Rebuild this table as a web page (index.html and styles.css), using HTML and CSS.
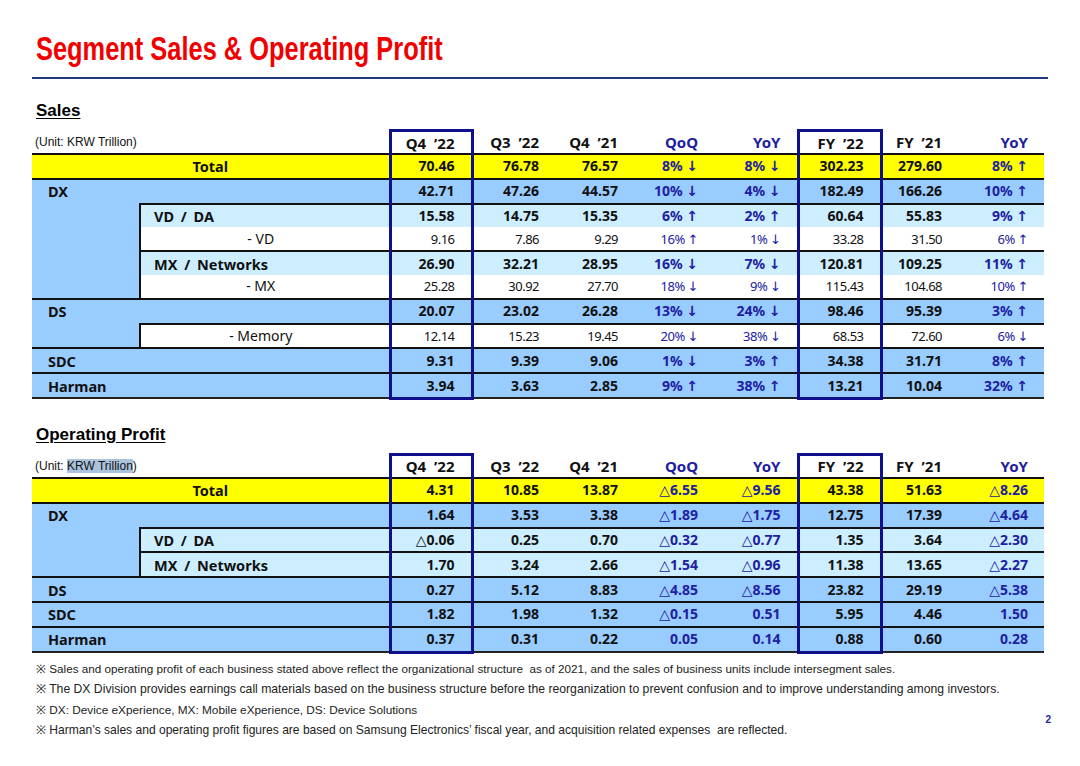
FILE: index.html
```html
<!DOCTYPE html>
<html>
<head>
<meta charset="utf-8">
<link rel="stylesheet" href="styles.css">
</head>
<body>
<div class="page">
  <h1 class="title"><span class="title-text">Segment Sales &amp; Operating Profit</span></h1>

  <h2 class="sec">Sales</h2>
  <table class="seg">
    <colgroup>
      <col class="w1"><col class="w2"><col class="wq4"><col class="wq3"><col class="wq21"><col class="wqoq"><col class="wyoy"><col class="wfy22"><col class="wfy21"><col class="wyoy2">
    </colgroup>
    <tr class="hd">
      <td colspan="2" class="unit">(Unit: KRW Trillion)</td>
      <td class="bx">Q4 ’22</td><td>Q3 ’22</td><td>Q4 ’21</td><td class="chg">QoQ</td><td class="chg">YoY</td><td class="bx">FY ’22</td><td>FY ’21</td><td class="chg">YoY</td>
    </tr>
    <tr class="tot bt">
      <td colspan="2" class="lbl-c">Total</td>
      <td class="bx">70.46</td><td>76.78</td><td>76.57</td><td class="chg">8% ↓</td><td class="chg">8% ↓</td><td class="bx">302.23</td><td>279.60</td><td class="chg">8% ↑</td>
    </tr>
    <tr class="mid bt">
      <td colspan="2" class="lbl">DX</td>
      <td class="bx">42.71</td><td>47.26</td><td>44.57</td><td class="chg">10% ↓</td><td class="chg">4% ↓</td><td class="bx">182.49</td><td>166.26</td><td class="chg">10% ↑</td>
    </tr>
    <tr class="sub bt">
      <td rowspan="4" class="sp"></td>
      <td class="lbl2">VD / DA</td>
      <td class="bx">15.58</td><td>14.75</td><td>15.35</td><td class="chg">6% ↑</td><td class="chg">2% ↑</td><td class="bx">60.64</td><td>55.83</td><td class="chg">9% ↑</td>
    </tr>
    <tr class="lo">
      <td class="lbl3">- VD</td>
      <td class="bx">9.16</td><td>7.86</td><td>9.29</td><td class="chg">16% ↑</td><td class="chg">1% ↓</td><td class="bx">33.28</td><td>31.50</td><td class="chg">6% ↑</td>
    </tr>
    <tr class="sub bt">
      <td class="lbl2">MX / Networks</td>
      <td class="bx">26.90</td><td>32.21</td><td>28.95</td><td class="chg">16% ↓</td><td class="chg">7% ↓</td><td class="bx">120.81</td><td>109.25</td><td class="chg">11% ↑</td>
    </tr>
    <tr class="lo">
      <td class="lbl3">- MX</td>
      <td class="bx">25.28</td><td>30.92</td><td>27.70</td><td class="chg">18% ↓</td><td class="chg">9% ↓</td><td class="bx">115.43</td><td>104.68</td><td class="chg">10% ↑</td>
    </tr>
    <tr class="mid bt">
      <td colspan="2" class="lbl">DS</td>
      <td class="bx">20.07</td><td>23.02</td><td>26.28</td><td class="chg">13% ↓</td><td class="chg">24% ↓</td><td class="bx">98.46</td><td>95.39</td><td class="chg">3% ↑</td>
    </tr>
    <tr class="lo bt">
      <td class="sp"></td>
      <td class="lbl3">- Memory</td>
      <td class="bx">12.14</td><td>15.23</td><td>19.45</td><td class="chg">20% ↓</td><td class="chg">38% ↓</td><td class="bx">68.53</td><td>72.60</td><td class="chg">6% ↓</td>
    </tr>
    <tr class="mid bt">
      <td colspan="2" class="lbl">SDC</td>
      <td class="bx">9.31</td><td>9.39</td><td>9.06</td><td class="chg">1% ↓</td><td class="chg">3% ↑</td><td class="bx">34.38</td><td>31.71</td><td class="chg">8% ↑</td>
    </tr>
    <tr class="mid bt last">
      <td colspan="2" class="lbl">Harman</td>
      <td class="bx">3.94</td><td>3.63</td><td>2.85</td><td class="chg">9% ↑</td><td class="chg">38% ↑</td><td class="bx">13.21</td><td>10.04</td><td class="chg">32% ↑</td>
    </tr>
  </table>

  <h2 class="sec sec2">Operating Profit</h2>
  <table class="seg">
    <colgroup>
      <col class="w1"><col class="w2"><col class="wq4"><col class="wq3"><col class="wq21"><col class="wqoq"><col class="wyoy"><col class="wfy22"><col class="wfy21"><col class="wyoy2">
    </colgroup>
    <tr class="hd">
      <td colspan="2" class="unit">(Unit: <span class="hl">KRW Trillion</span>)</td>
      <td class="bx">Q4 ’22</td><td>Q3 ’22</td><td>Q4 ’21</td><td class="chg">QoQ</td><td class="chg">YoY</td><td class="bx">FY ’22</td><td>FY ’21</td><td class="chg">YoY</td>
    </tr>
    <tr class="tot bt">
      <td colspan="2" class="lbl-c">Total</td>
      <td class="bx">4.31</td><td>10.85</td><td>13.87</td><td class="chg">△6.55</td><td class="chg">△9.56</td><td class="bx">43.38</td><td>51.63</td><td class="chg">△8.26</td>
    </tr>
    <tr class="mid bt">
      <td colspan="2" class="lbl">DX</td>
      <td class="bx">1.64</td><td>3.53</td><td>3.38</td><td class="chg">△1.89</td><td class="chg">△1.75</td><td class="bx">12.75</td><td>17.39</td><td class="chg">△4.64</td>
    </tr>
    <tr class="sub bt">
      <td rowspan="2" class="sp"></td>
      <td class="lbl2">VD / DA</td>
      <td class="bx">△0.06</td><td>0.25</td><td>0.70</td><td class="chg">△0.32</td><td class="chg">△0.77</td><td class="bx">1.35</td><td>3.64</td><td class="chg">△2.30</td>
    </tr>
    <tr class="sub bt">
      <td class="lbl2">MX / Networks</td>
      <td class="bx">1.70</td><td>3.24</td><td>2.66</td><td class="chg">△1.54</td><td class="chg">△0.96</td><td class="bx">11.38</td><td>13.65</td><td class="chg">△2.27</td>
    </tr>
    <tr class="mid bt">
      <td colspan="2" class="lbl">DS</td>
      <td class="bx">0.27</td><td>5.12</td><td>8.83</td><td class="chg">△4.85</td><td class="chg">△8.56</td><td class="bx">23.82</td><td>29.19</td><td class="chg">△5.38</td>
    </tr>
    <tr class="mid bt">
      <td colspan="2" class="lbl">SDC</td>
      <td class="bx">1.82</td><td>1.98</td><td>1.32</td><td class="chg">△0.15</td><td class="chg">0.51</td><td class="bx">5.95</td><td>4.46</td><td class="chg">1.50</td>
    </tr>
    <tr class="mid bt last">
      <td colspan="2" class="lbl">Harman</td>
      <td class="bx">0.37</td><td>0.31</td><td>0.22</td><td class="chg">0.05</td><td class="chg">0.14</td><td class="bx">0.88</td><td>0.60</td><td class="chg">0.28</td>
    </tr>
  </table>

  <div class="foot">
    <div class="notes">
      <p class="n1">※ Sales and operating profit of each business stated above reflect the organizational structure&nbsp; as of 2021, and the sales of business units include intersegment sales.</p>
      <p class="n2">※ The DX Division provides earnings call materials based on the business structure before the reorganization to prevent confusion and to improve understanding among investors.</p>
      <p class="n3">※ DX: Device eXperience, MX: Mobile eXperience, DS: Device Solutions</p>
      <p class="n4">※ Harman’s sales and operating profit figures are based on Samsung Electronics’ fiscal year, and acquisition related expenses&nbsp; are reflected.</p>
    </div>
    <div class="pgno">2</div>
  </div>
</div>
</body>
</html>
```

FILE: styles.css
```css
html, body {
  margin: 0;
  padding: 0;
  background: #ffffff;
}

.page {
  width: 1080px;
  height: 766px;
  box-sizing: border-box;
  padding: 0 26px 0 32px;
  font-family: "Noto Sans", "DejaVu Sans", sans-serif;
}

.title {
  margin: 0;
  padding: 32px 0 11px 4px;
  width: 1012px;
  border-bottom: 2px solid #1f3a80;
  font-family: "Liberation Sans", Arial, sans-serif;
  font-weight: bold;
  font-size: 33px;
  line-height: 34px;
  color: #f00000;
  white-space: nowrap;
}

.title-text {
  display: inline-block;
  transform: scaleX(0.77);
  transform-origin: 0 50%;
}

.sec {
  margin: 22px 0 0 4px;
  font-family: "Liberation Sans", Arial, sans-serif;
  font-weight: bold;
  font-size: 17px;
  line-height: 20px;
  text-decoration: underline;
  text-underline-offset: 2px;
  color: #000;
}

.sec2 {
  margin-top: 25px;
}

.seg {
  border-collapse: collapse;
  table-layout: fixed;
  width: 1012px;
  margin-top: 8px;
}

.w1 { width: 108px; }
.w2 { width: 250px; }
.wq4 { width: 82px; }
.wq3 { width: 83px; }
.wq21 { width: 79px; }
.wqoq { width: 80px; }
.wyoy { width: 84px; }
.wfy22 { width: 83px; }
.wfy21 { width: 77px; }
.wyoy2 { width: 86px; }

.seg td {
  height: 22.8px;
  padding: 0 16px 0 0;
  text-align: right;
  vertical-align: middle;
  font-family: "Noto Sans", "DejaVu Sans", sans-serif;
  font-weight: bold;
  font-size: 14px;
  line-height: 18px;
  letter-spacing: 0;
  color: #111;
  white-space: nowrap;
}

.seg .chg {
  color: #2020a0;
}

.seg tr.hd td {
  height: 21px;
  font-size: 15px;
  word-spacing: 4px;
}

.seg tr.hd td.unit {
  text-align: left;
  padding-left: 3px;
  font-family: "Liberation Sans", Arial, sans-serif;
  font-weight: normal;
  font-size: 12px;
  letter-spacing: 0;
  word-spacing: 0;
  color: #111;
}

.hl {
  background: #a9c4dc;
}

.seg td.bx {
  border-left: 3px solid #10108c;
  border-right: 3px solid #10108c;
}

.seg tr.hd td.bx {
  border-top: 3px solid #10108c;
}

.seg tr.bt td {
  border-top: 2px solid #111;
}

.seg tr.bt td.sp {
  border-top: none;
}

.seg tr.last td {
  border-bottom: 2px solid #222;
}

.seg tr.last td.bx {
  border-bottom: 3px solid #10108c;
}

.seg tr.tot td {
  background: #ffff00;
}

.seg tr.mid td {
  background: #99ccff;
}

.seg tr.sub td {
  background: #cceeff;
}

.seg tr.lo td {
  background: #ffffff;
  font-weight: normal;
  font-size: 13px;
  letter-spacing: -0.5px;
}

.seg td.sp {
  background: #99ccff !important;
}

.seg td.lbl-c {
  text-align: center;
  padding: 0;
  font-size: 14.5px;
}

.seg td.lbl {
  text-align: left;
  padding-left: 16px;
  font-size: 14.5px;
}

.seg td.lbl2 {
  text-align: left;
  padding-left: 13px;
  border-left: 2px solid #111;
  font-size: 14.5px;
  word-spacing: 3px;
}

.seg tr.lo td.lbl3 {
  text-align: center;
  padding: 0 8px 0 0;
  border-left: 2px solid #111;
  font-size: 14px;
  letter-spacing: 0;
}

.foot {
  display: flex;
  align-items: flex-start;
  margin-top: 5px;
  width: 1019px;
}

.notes {
  flex: 1;
  padding-left: 4px;
}

.notes p {
  margin: 0;
  font-family: "Liberation Sans", Arial, sans-serif;
  font-size: 11.7px;
  line-height: 20.6px;
  color: #222;
}

.notes .n2 { font-size: 12.2px; }
.notes .n3 { font-size: 11.8px; }
.notes .n4 { font-size: 12.05px; }

.pgno {
  margin-top: 55px;
  font-family: "Liberation Sans", Arial, sans-serif;
  font-weight: bold;
  font-size: 10px;
  color: #2020a0;
}
```
